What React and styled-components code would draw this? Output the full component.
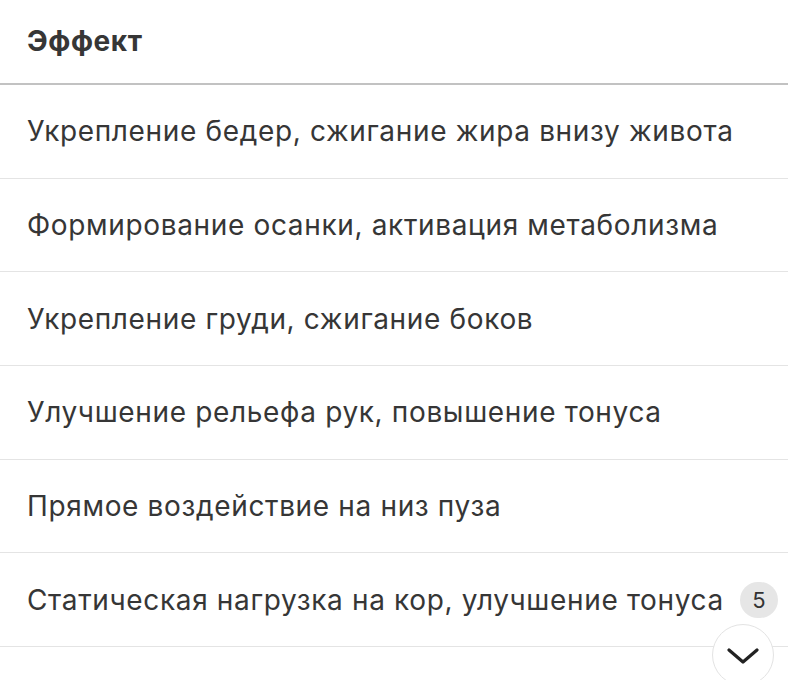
import React from 'react';
import styled, { createGlobalStyle } from 'styled-components'

const Global = createGlobalStyle`
body {
  margin:0;
  background:#fff;
  font-family: Inter, "Noto Sans", sans-serif;
}
`

const Table = styled.div`
width:788px;
height:680px;
overflow:hidden;
position:relative;
display:flex;
flex-direction:column;
color:#363636;
`

const Header = styled.div`
height:85px;
display:flex;
align-items:center;
padding:0 27px 2px;
font-weight:700;
font-size:28px;
letter-spacing:0.6px;
border-bottom:2px solid #c2c2c2;
box-sizing:border-box;
flex-shrink:0;
`

const Row = styled.div`
height:93.7px;
display:flex;
align-items:center;
justify-content:space-between;
padding:0 10px 0 27px;
font-size:28px;
letter-spacing:0.65px;
border-bottom:1.5px solid #e4e4e4;
box-sizing:border-box;
flex-shrink:0;
`

const Badge = styled.span`
width:38px;
height:36px;
border-radius:18px;
background:#e6e6e6;
display:flex;
align-items:center;
justify-content:center;
font-size:22px;
letter-spacing:0;
color:#333;
`

const ScrollBtn = styled.div`
position:absolute;
left:712px;
top:624px;
width:62px;
height:62px;
border-radius:50%;
background:#fff;
border:1.5px solid #e3e3e3;
box-sizing:border-box;
display:flex;
justify-content:center;
padding-top:22px;
`

const rows = [
  { text: 'Укрепление бедер, сжигание жира внизу живота' },
  { text: 'Формирование осанки, активация метаболизма' },
  { text: 'Укрепление груди, сжигание боков' },
  { text: 'Улучшение рельефа рук, повышение тонуса' },
  { text: 'Прямое воздействие на низ пуза' },
  { text: 'Статическая нагрузка на кор, улучшение тонуса', count: 5 },
]

const App = () => {
  return (
    <>
      <Global />
      <Table>
        <Header>Эффект</Header>
        {rows.map((r, i) => (
          <Row key={i}>
            <span>{r.text}</span>
            {r.count && <Badge>{r.count}</Badge>}
          </Row>
        ))}
        <ScrollBtn>
          <svg width="32" height="18" viewBox="0 0 32 18" fill="none">
            <path d="M2 3 L16 15 L30 3" stroke="#222" strokeWidth="3.2" strokeLinecap="round" strokeLinejoin="round" />
          </svg>
        </ScrollBtn>
      </Table>
    </>
  )
}

export default App
